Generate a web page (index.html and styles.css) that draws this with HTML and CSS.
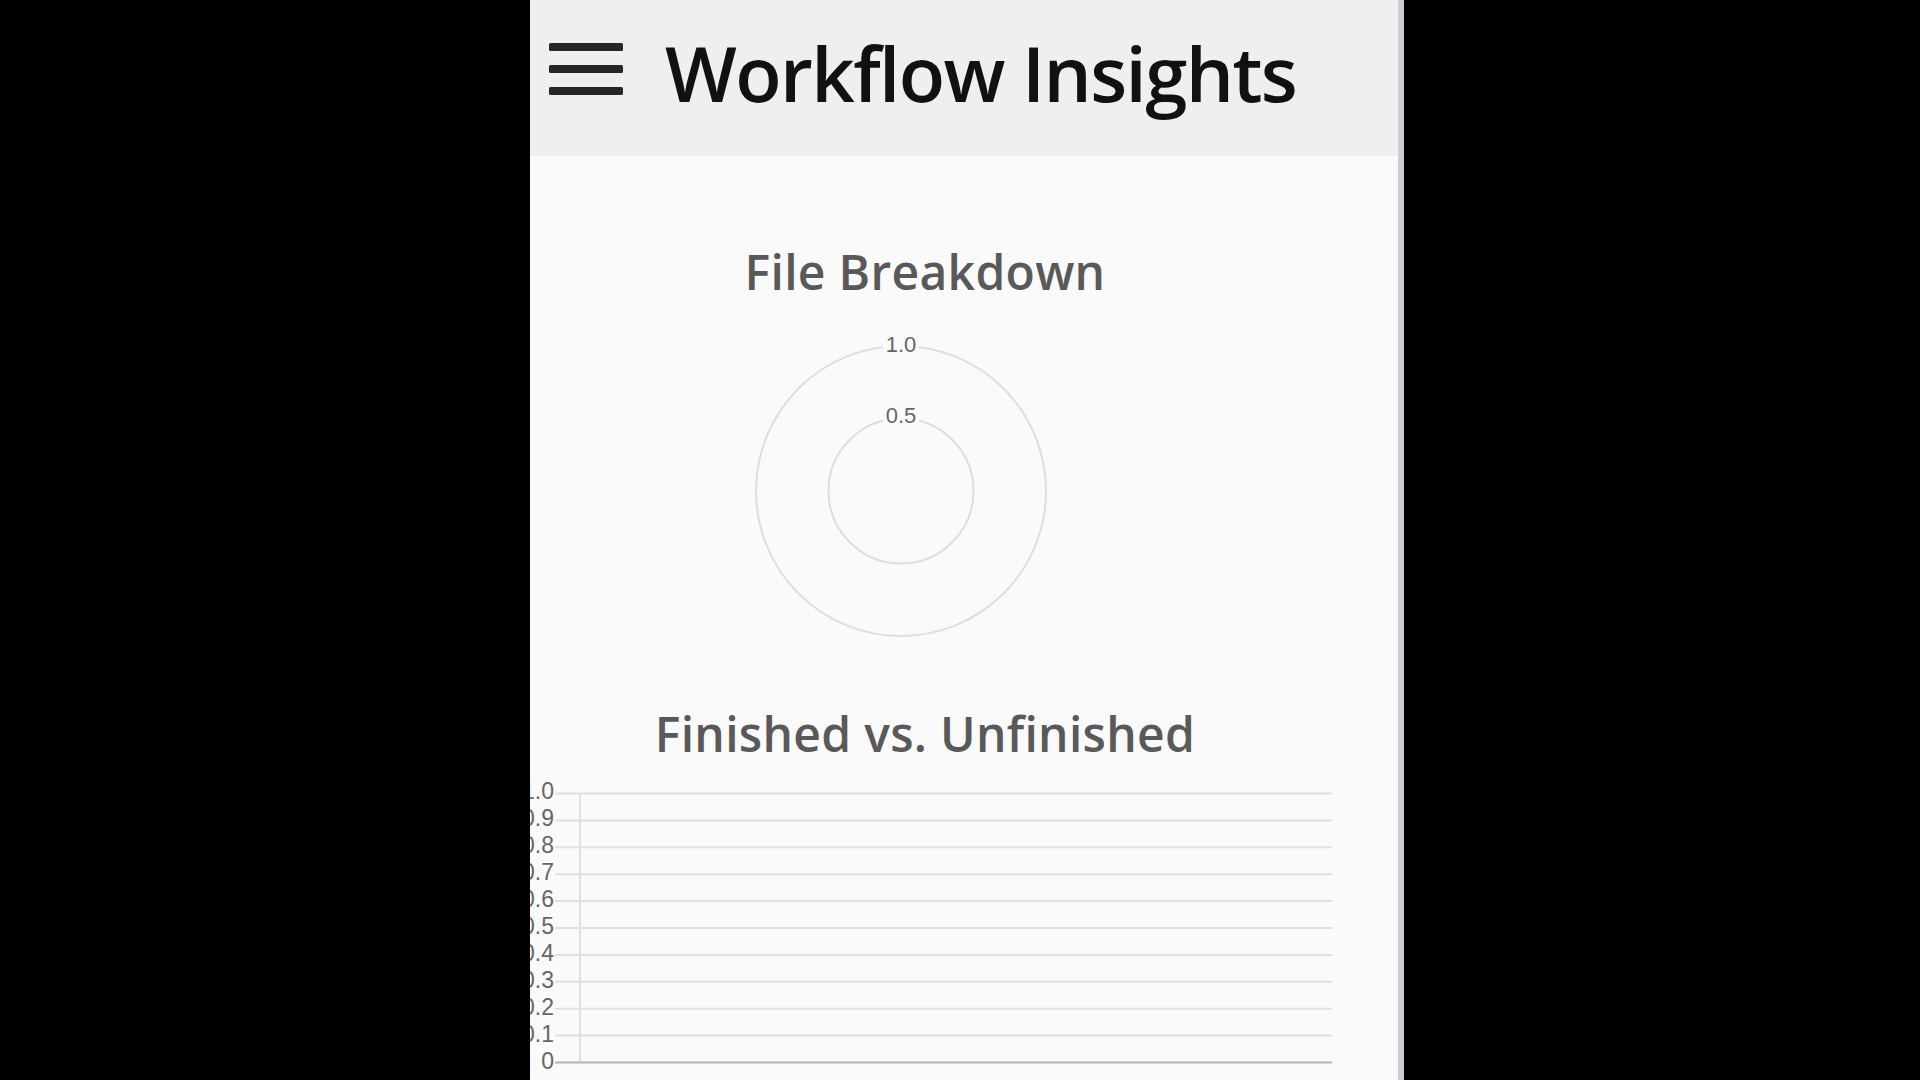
FILE: index.html
```html
<!DOCTYPE html>
<html lang="en">
<head>
<meta charset="utf-8">
<title>Workflow Insights</title>
<link rel="stylesheet" href="styles.css">
</head>
<body>
<div class="app">
  <header class="topbar">
    <button class="menu" aria-label="Menu">
      <svg width="74" height="52" viewBox="0 0 74 52">
        <rect x="0" y="0" width="74" height="8" rx="1.5" fill="#262626"/>
        <rect x="0" y="22" width="74" height="8" rx="1.5" fill="#262626"/>
        <rect x="0" y="44" width="74" height="8" rx="1.5" fill="#262626"/>
      </svg>
    </button>
    <h1 class="title">Workflow Insights</h1>
  </header>
  <main class="content">
    <section class="chart-card">
      <h2 class="chart-title">File Breakdown</h2>
      <svg class="polar-chart" width="814" height="360" viewBox="0 0 814 360">
        <circle cx="383" cy="189" r="145" fill="none" stroke="#dedede" stroke-width="2"/>
        <circle cx="383" cy="189" r="72.5" fill="none" stroke="#dedede" stroke-width="2"/>
        <rect x="365" y="30" width="36" height="24" fill="#fafafa"/>
        <text x="383" y="50" class="tick" text-anchor="middle">1.0</text>
        <rect x="365" y="101" width="36" height="24" fill="#fafafa"/>
        <text x="383" y="121" class="tick" text-anchor="middle">0.5</text>
      </svg>
    </section>
    <section class="chart-card second">
      <h2 class="chart-title">Finished vs. Unfinished</h2>
      <svg class="bar-chart" width="814" height="320" viewBox="0 0 814 320">
        <g stroke="#e0e0e0" stroke-width="2">
          <line x1="37" y1="29.5" x2="814" y2="29.5"/>
          <line x1="37" y1="56.4" x2="814" y2="56.4"/>
          <line x1="37" y1="83.3" x2="814" y2="83.3"/>
          <line x1="37" y1="110.2" x2="814" y2="110.2"/>
          <line x1="37" y1="137.1" x2="814" y2="137.1"/>
          <line x1="37" y1="164" x2="814" y2="164"/>
          <line x1="37" y1="190.9" x2="814" y2="190.9"/>
          <line x1="37" y1="217.8" x2="814" y2="217.8"/>
          <line x1="37" y1="244.7" x2="814" y2="244.7"/>
          <line x1="37" y1="271.6" x2="814" y2="271.6"/>
          <line x1="62" y1="29.5" x2="62" y2="298.5"/>
        </g>
        <line x1="37" y1="298.5" x2="814" y2="298.5" stroke="#b4b4b4" stroke-width="2"/>
        <g class="tick axis" text-anchor="end">
          <text x="36" y="35">1.0</text>
          <text x="36" y="62">0.9</text>
          <text x="36" y="89">0.8</text>
          <text x="36" y="116">0.7</text>
          <text x="36" y="143">0.6</text>
          <text x="36" y="170">0.5</text>
          <text x="36" y="197">0.4</text>
          <text x="36" y="224">0.3</text>
          <text x="36" y="251">0.2</text>
          <text x="36" y="278">0.1</text>
          <text x="36" y="305">0</text>
        </g>
      </svg>
    </section>
  </main>
</div>
</body>
</html>
```
FILE: styles.css
```css
html, body {
  margin: 0;
  padding: 0;
  background: #000;
}

body {
  height: 1080px;
  overflow: hidden;
  font-family: "Open Sans", "Liberation Sans", sans-serif;
}

.app {
  margin-left: 530px;
  width: 868px;
  height: 1080px;
  background: #fafafa;
  border-right: 6px solid #cdcdd2;
  overflow: hidden;
}

.topbar {
  height: 156px;
  background: #efefef;
  display: flex;
  align-items: flex-start;
  padding-left: 19px;
}

.menu {
  margin: 43px 0 0 0;
  padding: 0;
  border: 0;
  background: none;
  width: 74px;
  height: 52px;
  display: block;
}

.menu svg {
  display: block;
}

.title {
  margin: 28px 0 0 42px;
  font-size: 76px;
  line-height: 90px;
  font-weight: 600;
  color: #111;
  letter-spacing: -1.6px;
}

.content {
  width: 814px;
  margin-left: -12px;
  padding-top: 86px;
}

.chart-card {
  display: flex;
  flex-direction: column;
  align-items: stretch;
}

.chart-card.second {
  margin-top: 42px;
}

.chart-title {
  margin: 0;
  height: 60px;
  font-size: 48px;
  line-height: 60px;
  font-weight: 600;
  color: #595959;
  text-align: center;
  letter-spacing: 0.3px;
}

.polar-chart, .bar-chart {
  display: block;
}

.tick {
  font-family: "Liberation Sans", Arial, sans-serif;
  font-size: 22px;
  fill: #666;
}

.tick.axis {
  font-size: 23px;
}
```
